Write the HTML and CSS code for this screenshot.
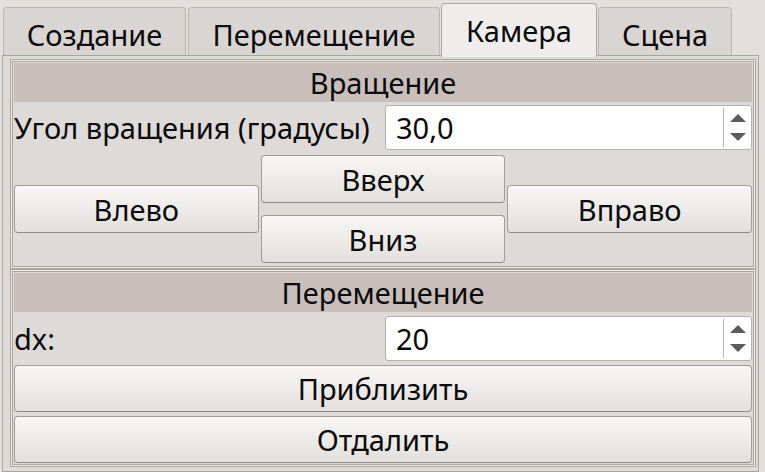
FILE: index.html
```html
<!DOCTYPE html>
<html>
<head>
<meta charset="utf-8">
<link rel="stylesheet" href="styles.css">
</head>
<body>
<div class="tabs">
  <div class="tab t1">Создание</div>
  <div class="tab t2">Перемещение</div>
  <div class="tab t3 sel">Камера</div>
  <div class="tab t4">Сцена</div>
</div>
<div class="pane">
  <section class="group g1">
    <div class="hdr">Вращение</div>
    <div class="row">
      <span class="lbl">Угол вращения (градусы)</span>
      <div class="spin"><span class="val">30,0</span><span class="arrows"><i class="au"></i><i class="ad"></i></span></div>
    </div>
    <div class="dpad">
      <button class="btn bl">Влево</button>
      <button class="btn bu">Вверх</button>
      <button class="btn bd">Вниз</button>
      <button class="btn br">Вправо</button>
    </div>
  </section>
  <section class="group g2">
    <div class="hdr">Перемещение</div>
    <div class="row row2">
      <span class="lbl">dx:</span>
      <div class="spin"><span class="val">20</span><span class="arrows"><i class="au"></i><i class="ad"></i></span></div>
    </div>
    <button class="btn wide">Приблизить</button>
    <button class="btn wide">Отдалить</button>
  </section>
</div>
</body>
</html>
```
FILE: styles.css
```css
html, body { margin: 0; padding: 0; }
body {
  width: 765px;
  height: 472px;
  overflow: hidden;
  background: #e2dfdc;
  font-family: "Noto Sans", "DejaVu Sans", sans-serif;
  font-size: 29px;
  color: #0a0a0a;
}
.tabs {
  display: flex;
  align-items: flex-end;
  height: 55px;
  padding-left: 3px;
  position: relative;
  z-index: 1;
}
.tab {
  box-sizing: border-box;
  height: 48px;
  background: #d9d5d2;
  border: 1px solid #bbb7b3;
  border-bottom: none;
  border-radius: 4px 4px 0 0;
  display: flex;
  align-items: center;
  justify-content: center;
  padding-top: 5px;
  margin-right: 2px;
}
.t1 { width: 183px; }
.t2 { width: 252px; margin-right: 1px; }
.t3 { width: 156px; margin-right: 1px; }
.t4 { width: 134px; }
.sel {
  height: 54px;
  margin-bottom: -2px;
  background: #efedeb;
  border-color: #aaa6a2;
  padding-top: 0;
}
.pane {
  box-sizing: border-box;
  margin-left: 2px;
  width: 757px;
  height: 417px;
  border: 1px solid #a8a4a0;
  background: #dedad7;
  padding: 3px 2px 0 7px;
}
.group {
  border: 1px solid #a9a5a1;
  box-shadow: inset 0 0 0 1px #ebe8e5, inset 0 0 0 2px #a9a5a1;
  padding: 3px;
  display: flex;
  flex-direction: column;
}
.g1 { padding-bottom: 5px; }
.hdr {
  height: 39px;
  background: #c8bfbb;
  display: flex;
  align-items: center;
  justify-content: center;
}
.row {
  display: grid;
  grid-template-columns: 1fr 1fr;
  column-gap: 4px;
  align-items: center;
  margin-top: 3px;
  height: 45px;
}
.row2 { margin-top: 4px; }
.lbl { white-space: nowrap; }
.spin {
  box-sizing: border-box;
  height: 45px;
  background: #fff;
  border: 1px solid #b5b1ad;
  border-radius: 3px;
  display: flex;
  align-items: center;
}
.val { flex: 1; padding-left: 10px; }
.arrows {
  box-sizing: border-box;
  width: 28px;
  height: 39px;
  border-left: 1px solid #b8b4b0;
  display: flex;
  flex-direction: column;
  align-items: center;
  justify-content: center;
  gap: 11px;
}
.arrows i { display: block; width: 0; height: 0; border-left: 8px solid transparent; border-right: 8px solid transparent; }
.au { border-bottom: 8px solid #5c5c5c; }
.ad { border-top: 8px solid #5c5c5c; }
.dpad {
  display: grid;
  grid-template-columns: 1fr 1fr 1fr;
  grid-template-rows: 48px 48px;
  row-gap: 12px;
  column-gap: 2px;
  margin-top: 5px;
}
.btn {
  font: inherit;
  color: inherit;
  box-sizing: border-box;
  margin: 0;
  padding: 0;
  border: 1px solid #a09c98;
  border-bottom-color: #8e8a87;
  border-radius: 4px;
  background: linear-gradient(#f8f7f6, #e2dfdc);
}
.bl { grid-column: 1; grid-row: 1 / 3; align-self: center; height: 48px; }
.bu { grid-column: 2; grid-row: 1; }
.bd { grid-column: 2; grid-row: 2; }
.br { grid-column: 3; grid-row: 1 / 3; align-self: center; height: 48px; }
.wide { height: 47px; margin-top: 4px; }
```
